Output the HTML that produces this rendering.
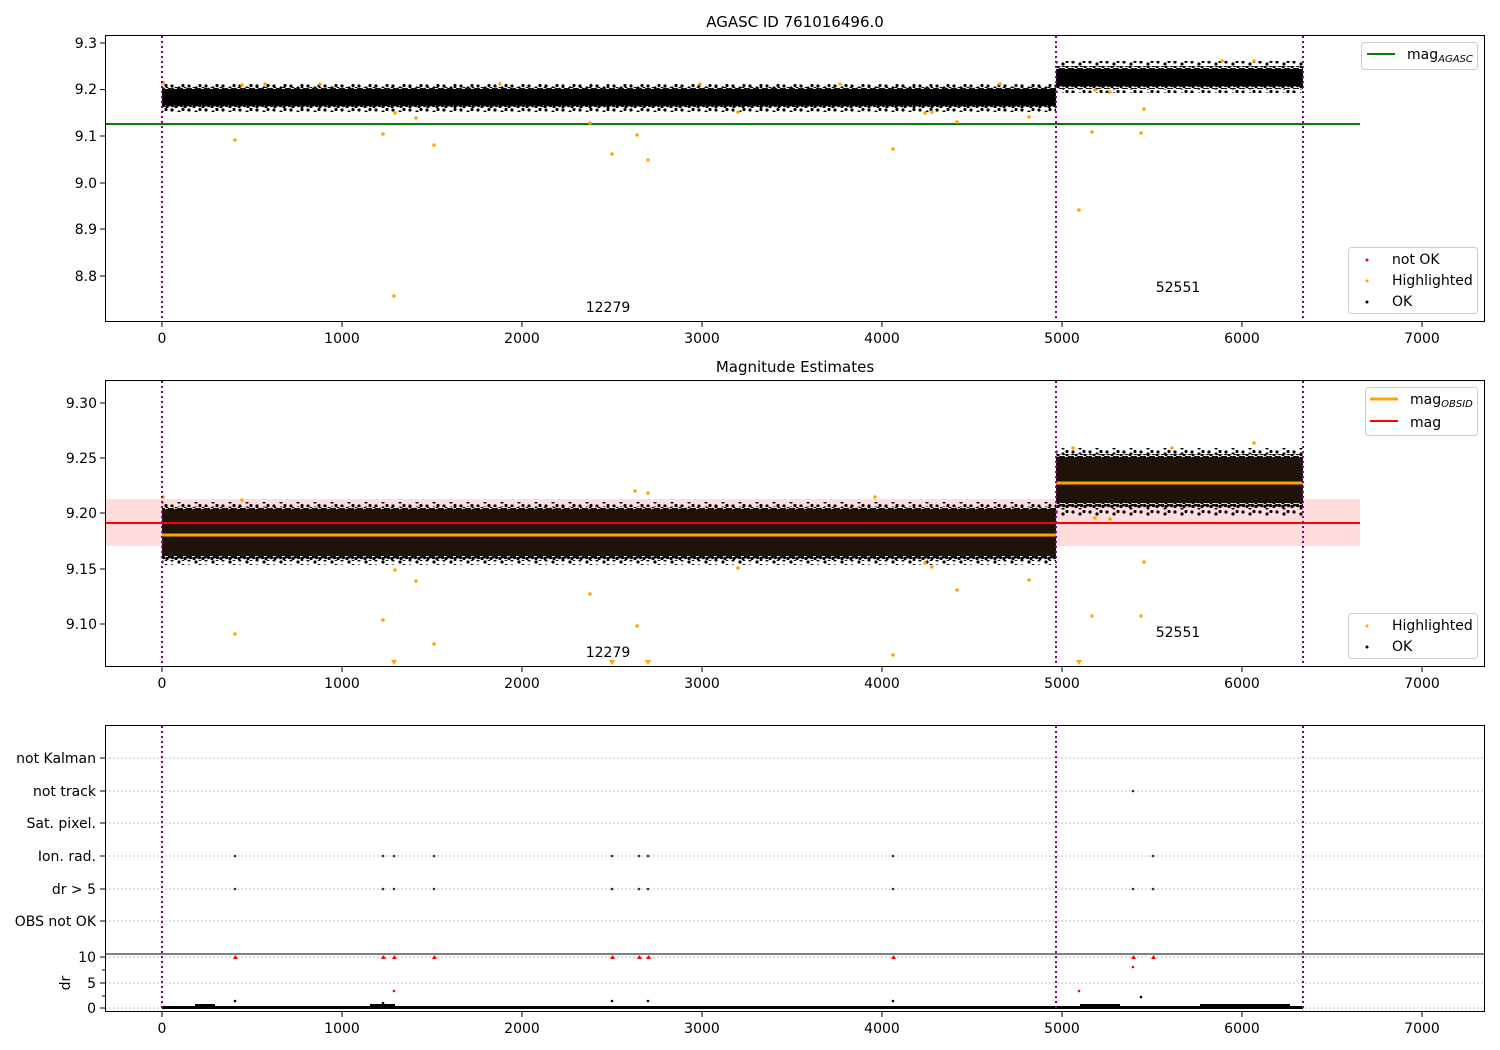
<!DOCTYPE html>
<html><head><style>
html,body{margin:0;padding:0;background:#fff;}
svg{display:block;font-family:"DejaVu Sans","Liberation Sans",sans-serif;}
</style></head><body>
<svg width="1500" height="1050" viewBox="0 0 1500 1050" xmlns="http://www.w3.org/2000/svg">
<rect width="1500" height="1050" fill="#fff"/>
<defs>
<pattern id="spk" width="9" height="4" patternUnits="userSpaceOnUse">
<circle cx="1.5" cy="1.5" r="1.7" fill="#000"/><circle cx="5" cy="2.5" r="1.7" fill="#000"/><circle cx="7.5" cy="1" r="1.5" fill="#000"/>
</pattern>
<pattern id="spk2" width="17" height="6" patternUnits="userSpaceOnUse">
<circle cx="2" cy="2" r="1.6" fill="#000"/><circle cx="9" cy="4" r="1.6" fill="#000"/><circle cx="13" cy="1.5" r="1.6" fill="#000"/>
</pattern>
</defs>

<!-- ===== Panel 1 ===== -->
<text x="795" y="27" font-size="15" text-anchor="middle">AGASC ID 761016496.0</text>
<rect x="162" y="84" width="894" height="4" fill="url(#spk2)"/>
<rect x="162" y="87" width="894" height="3" fill="url(#spk)"/>
<rect x="162" y="89" width="894" height="16" fill="#000"/>
<rect x="162" y="105" width="894" height="3" fill="url(#spk)"/>
<rect x="162" y="108" width="894" height="4" fill="url(#spk2)"/>
<rect x="1056" y="61" width="247" height="5" fill="url(#spk2)"/>
<rect x="1056" y="66" width="247" height="4" fill="url(#spk)"/>
<rect x="1056" y="69" width="247" height="17" fill="#000"/>
<rect x="1056" y="86" width="247" height="3" fill="url(#spk)"/>
<rect x="1056" y="89" width="247" height="4" fill="url(#spk2)"/>
<line x1="105" y1="124" x2="1360" y2="124" stroke="#008000" stroke-width="2"/>
<g fill="orange">
<circle cx="163" cy="83" r="2"/><circle cx="235" cy="140" r="1.8"/><circle cx="242" cy="85" r="1.8"/><circle cx="383" cy="134" r="1.8"/><circle cx="395" cy="113" r="1.8"/><circle cx="416" cy="118" r="1.8"/><circle cx="434" cy="145" r="1.8"/><circle cx="590" cy="123" r="1.8"/><circle cx="612" cy="154" r="1.8"/><circle cx="637" cy="135" r="1.8"/><circle cx="648" cy="160" r="1.8"/><circle cx="738" cy="112" r="1.8"/><circle cx="893" cy="149" r="1.8"/><circle cx="925" cy="113" r="1.8"/><circle cx="932" cy="112" r="1.8"/><circle cx="957" cy="122" r="1.8"/><circle cx="1029" cy="117" r="1.8"/><circle cx="1079" cy="210" r="1.8"/><circle cx="1092" cy="132" r="1.8"/><circle cx="1141" cy="133" r="1.8"/><circle cx="1144" cy="109" r="1.8"/><circle cx="1095" cy="90" r="1.8"/><circle cx="1110" cy="92" r="1.8"/><circle cx="394" cy="296" r="1.8"/>
<circle cx="265" cy="84" r="1.8"/><circle cx="320" cy="84" r="1.8"/><circle cx="500" cy="84" r="1.8"/><circle cx="700" cy="84" r="1.8"/><circle cx="840" cy="84" r="1.8"/><circle cx="1000" cy="84" r="1.8"/><circle cx="1254" cy="61" r="1.8"/><circle cx="1222" cy="61" r="1.8"/>
</g>
<text x="608" y="312" font-size="14" text-anchor="middle">12279</text>
<text x="1178" y="292" font-size="14" text-anchor="middle">52551</text>
<g stroke="#800080" stroke-width="2" stroke-dasharray="2 3">
<line x1="162" y1="36" x2="162" y2="321"/><line x1="1056" y1="36" x2="1056" y2="321"/><line x1="1303" y1="36" x2="1303" y2="321"/>
</g>
<rect x="105.5" y="35.5" width="1379" height="286" fill="none" stroke="#000" stroke-width="1"/>
<g stroke="#000"><line x1="100" y1="43" x2="105" y2="43"/><line x1="100" y1="89.6" x2="105" y2="89.6"/><line x1="100" y1="136" x2="105" y2="136"/><line x1="100" y1="183" x2="105" y2="183"/><line x1="100" y1="229" x2="105" y2="229"/><line x1="100" y1="276" x2="105" y2="276"/></g>
<g font-size="14" text-anchor="end"><text x="97" y="48">9.3</text><text x="97" y="94">9.2</text><text x="97" y="141">9.1</text><text x="97" y="188">9.0</text><text x="97" y="234">8.9</text><text x="97" y="281">8.8</text></g>
<g stroke="#000"><line x1="162" y1="322" x2="162" y2="327"/><line x1="342" y1="322" x2="342" y2="327"/><line x1="522" y1="322" x2="522" y2="327"/><line x1="702" y1="322" x2="702" y2="327"/><line x1="882" y1="322" x2="882" y2="327"/><line x1="1062" y1="322" x2="1062" y2="327"/><line x1="1242" y1="322" x2="1242" y2="327"/><line x1="1422" y1="322" x2="1422" y2="327"/></g>
<g font-size="14" text-anchor="middle"><text x="162" y="343">0</text><text x="342" y="343">1000</text><text x="522" y="343">2000</text><text x="702" y="343">3000</text><text x="882" y="343">4000</text><text x="1062" y="343">5000</text><text x="1242" y="343">6000</text><text x="1422" y="343">7000</text></g>
<rect x="1361.5" y="42.5" width="116" height="27" rx="3" fill="#fff" fill-opacity="0.8" stroke="#ccc"/>
<line x1="1367" y1="54" x2="1395" y2="54" stroke="#008000" stroke-width="2"/>
<text x="1407" y="59" font-size="14">mag<tspan font-size="10" font-style="italic" dy="3">AGASC</tspan></text>
<rect x="1348.5" y="247.5" width="129" height="66" rx="3" fill="#fff" fill-opacity="0.8" stroke="#ccc"/>
<circle cx="1367" cy="260" r="1.5" fill="red"/><text x="1392" y="264" font-size="14">not OK</text>
<circle cx="1367" cy="281" r="1.5" fill="orange"/><text x="1392" y="285" font-size="14">Highlighted</text>
<circle cx="1367" cy="302" r="1.5" fill="#000"/><text x="1392" y="306" font-size="14">OK</text>

<!-- ===== Panel 2 ===== -->
<text x="795" y="372" font-size="15" text-anchor="middle">Magnitude Estimates</text>
<rect x="105" y="499" width="1255" height="47" fill="#ffdddd"/>
<rect x="162" y="502" width="894" height="5" fill="url(#spk2)"/>
<rect x="162" y="507" width="894" height="4" fill="url(#spk)"/>
<rect x="162" y="510" width="894" height="46" fill="#1f1206"/>
<rect x="162" y="556" width="894" height="4" fill="url(#spk)"/>
<rect x="162" y="560" width="894" height="5" fill="url(#spk2)"/>
<rect x="1056" y="448" width="247" height="6" fill="url(#spk2)"/>
<rect x="1056" y="454" width="247" height="5" fill="url(#spk)"/>
<rect x="1056" y="458" width="247" height="45" fill="#1f1206"/>
<rect x="1056" y="503" width="247" height="5" fill="url(#spk)"/>
<rect x="1056" y="508" width="247" height="8" fill="url(#spk2)"/>
<line x1="162" y1="535" x2="1056" y2="535" stroke="orange" stroke-width="3"/>
<line x1="1056" y1="483" x2="1303" y2="483" stroke="orange" stroke-width="3"/>
<line x1="105" y1="523" x2="1360" y2="523" stroke="red" stroke-width="2"/>
<g fill="orange">
<circle cx="163" cy="497" r="1.8"/><circle cx="235" cy="634" r="1.8"/><circle cx="242" cy="500" r="1.8"/><circle cx="383" cy="620" r="1.8"/><circle cx="395" cy="570" r="1.8"/><circle cx="416" cy="581" r="1.8"/><circle cx="434" cy="644" r="1.8"/><circle cx="590" cy="594" r="1.8"/><circle cx="637" cy="626" r="1.8"/><circle cx="738" cy="568" r="1.8"/><circle cx="893" cy="655" r="1.8"/><circle cx="925" cy="563" r="1.8"/><circle cx="932" cy="567" r="1.8"/><circle cx="957" cy="590" r="1.8"/><circle cx="1029" cy="580" r="1.8"/><circle cx="1092" cy="616" r="1.8"/><circle cx="1141" cy="616" r="1.8"/><circle cx="1144" cy="562" r="1.8"/><circle cx="1095" cy="518" r="1.8"/><circle cx="1110" cy="519" r="1.8"/><circle cx="1073" cy="448" r="1.8"/><circle cx="1172" cy="448" r="1.8"/><circle cx="1254" cy="443" r="1.8"/><circle cx="635" cy="491" r="1.8"/><circle cx="648" cy="493" r="1.8"/><circle cx="875" cy="497" r="1.8"/>
<path d="M391 660h6l-3 5z M609 660h6l-3 5z M645 660h6l-3 5z M1076 660h6l-3 5z"/>
</g>
<text x="608" y="657" font-size="14" text-anchor="middle">12279</text>
<text x="1178" y="637" font-size="14" text-anchor="middle">52551</text>
<g stroke="#800080" stroke-width="2" stroke-dasharray="2 3">
<line x1="162" y1="381" x2="162" y2="666"/><line x1="1056" y1="381" x2="1056" y2="666"/><line x1="1303" y1="381" x2="1303" y2="666"/>
</g>
<rect x="105.5" y="380.5" width="1379" height="286" fill="none" stroke="#000"/>
<g stroke="#000"><line x1="100" y1="403" x2="105" y2="403"/><line x1="100" y1="458" x2="105" y2="458"/><line x1="100" y1="513" x2="105" y2="513"/><line x1="100" y1="569" x2="105" y2="569"/><line x1="100" y1="624" x2="105" y2="624"/></g>
<g font-size="14" text-anchor="end"><text x="97" y="408">9.30</text><text x="97" y="463">9.25</text><text x="97" y="518">9.20</text><text x="97" y="574">9.15</text><text x="97" y="629">9.10</text></g>
<g stroke="#000"><line x1="162" y1="667" x2="162" y2="672"/><line x1="342" y1="667" x2="342" y2="672"/><line x1="522" y1="667" x2="522" y2="672"/><line x1="702" y1="667" x2="702" y2="672"/><line x1="882" y1="667" x2="882" y2="672"/><line x1="1062" y1="667" x2="1062" y2="672"/><line x1="1242" y1="667" x2="1242" y2="672"/><line x1="1422" y1="667" x2="1422" y2="672"/></g>
<g font-size="14" text-anchor="middle"><text x="162" y="688">0</text><text x="342" y="688">1000</text><text x="522" y="688">2000</text><text x="702" y="688">3000</text><text x="882" y="688">4000</text><text x="1062" y="688">5000</text><text x="1242" y="688">6000</text><text x="1422" y="688">7000</text></g>
<rect x="1365.5" y="387.5" width="112" height="48" rx="3" fill="#fff" fill-opacity="0.8" stroke="#ccc"/>
<line x1="1370" y1="399" x2="1398" y2="399" stroke="orange" stroke-width="3"/>
<text x="1410" y="404" font-size="14">mag<tspan font-size="10" font-style="italic" dy="3">OBSID</tspan></text>
<line x1="1370" y1="421" x2="1398" y2="421" stroke="red" stroke-width="2"/>
<text x="1410" y="427" font-size="14">mag</text>
<rect x="1348.5" y="613.5" width="129" height="45" rx="3" fill="#fff" fill-opacity="0.8" stroke="#ccc"/>
<circle cx="1367" cy="626" r="1.5" fill="orange"/><text x="1392" y="630" font-size="14">Highlighted</text>
<circle cx="1367" cy="647" r="1.5" fill="#000"/><text x="1392" y="651" font-size="14">OK</text>

<!-- ===== Panel 3 ===== -->
<g stroke="#b0b0b0" stroke-dasharray="2 2" stroke-width="0.8">
<line x1="105" y1="758" x2="1485" y2="758"/><line x1="105" y1="791" x2="1485" y2="791"/><line x1="105" y1="823" x2="1485" y2="823"/><line x1="105" y1="856" x2="1485" y2="856"/><line x1="105" y1="889" x2="1485" y2="889"/><line x1="105" y1="921" x2="1485" y2="921"/>
<line x1="105" y1="957" x2="1485" y2="957"/><line x1="105" y1="983" x2="1485" y2="983"/><line x1="105" y1="1008" x2="1485" y2="1008"/>
</g>
<g font-size="14" text-anchor="end">
<text x="96" y="763">not Kalman</text><text x="96" y="796">not track</text><text x="96" y="828">Sat. pixel.</text><text x="96" y="861">Ion. rad.</text><text x="96" y="894">dr &gt; 5</text><text x="96" y="926">OBS not OK</text>
<text x="96" y="962">10</text><text x="96" y="988">5</text><text x="96" y="1013">0</text>
</g>
<text x="70" y="983" font-size="14" text-anchor="middle" transform="rotate(-90 70 983)">dr</text>
<g stroke="#000">
<line x1="100" y1="758" x2="105" y2="758"/><line x1="100" y1="791" x2="105" y2="791"/><line x1="100" y1="823" x2="105" y2="823"/><line x1="100" y1="856" x2="105" y2="856"/><line x1="100" y1="889" x2="105" y2="889"/><line x1="100" y1="921" x2="105" y2="921"/>
<line x1="100" y1="957" x2="105" y2="957"/><line x1="100" y1="983" x2="105" y2="983"/><line x1="100" y1="1008" x2="105" y2="1008"/>
<line x1="102" y1="970" x2="105" y2="970"/><line x1="102" y1="996" x2="105" y2="996"/>
</g>
<g fill="#333">
<circle cx="235" cy="856" r="1.3"/><circle cx="383" cy="856" r="1.3"/><circle cx="394" cy="856" r="1.3"/><circle cx="434" cy="856" r="1.3"/><circle cx="612" cy="856" r="1.3"/><circle cx="639" cy="856" r="1.3"/><circle cx="648" cy="856" r="1.3"/><circle cx="893" cy="856" r="1.3"/><circle cx="1153" cy="856" r="1.3"/>
<circle cx="235" cy="889" r="1.3"/><circle cx="383" cy="889" r="1.3"/><circle cx="394" cy="889" r="1.3"/><circle cx="434" cy="889" r="1.3"/><circle cx="612" cy="889" r="1.3"/><circle cx="639" cy="889" r="1.3"/><circle cx="648" cy="889" r="1.3"/><circle cx="893" cy="889" r="1.3"/><circle cx="1133" cy="889" r="1.3"/><circle cx="1153" cy="889" r="1.3"/>
<circle cx="1133" cy="791" r="1.3"/>
</g>
<g fill="red">
<path d="M233 959h5l-2.5-4z M381 959h5l-2.5-4z M392 959h5l-2.5-4z M432 959h5l-2.5-4z M610 959h5l-2.5-4z M637 959h5l-2.5-4z M646 959h5l-2.5-4z M891 959h5l-2.5-4z M1131 959h5l-2.5-4z M1151 959h5l-2.5-4z"/>
<circle cx="1133" cy="967" r="1.3"/><circle cx="394" cy="991" r="1.3"/><circle cx="1079" cy="991" r="1.3"/>
</g>
<rect x="162" y="1006" width="1141" height="3" fill="#000"/>
<g fill="#000"><circle cx="235" cy="1001" r="1.3"/><circle cx="612" cy="1001" r="1.3"/><circle cx="893" cy="1001" r="1.3"/><circle cx="1141" cy="997" r="1.3"/><circle cx="383" cy="1003" r="1.3"/><circle cx="648" cy="1001" r="1.3"/>
<rect x="195" y="1004" width="20" height="2"/><rect x="370" y="1004" width="25" height="2"/><rect x="1080" y="1004" width="40" height="2"/><rect x="1200" y="1004" width="90" height="2"/></g>
<line x1="105" y1="954" x2="1485" y2="954" stroke="#000"/>
<g stroke="#800080" stroke-width="2" stroke-dasharray="2 3">
<line x1="162" y1="726" x2="162" y2="1011"/><line x1="1056" y1="726" x2="1056" y2="1011"/><line x1="1303" y1="726" x2="1303" y2="1011"/>
</g>
<rect x="105.5" y="725.5" width="1379" height="286" fill="none" stroke="#000"/>
<g stroke="#000"><line x1="162" y1="1012" x2="162" y2="1017"/><line x1="342" y1="1012" x2="342" y2="1017"/><line x1="522" y1="1012" x2="522" y2="1017"/><line x1="702" y1="1012" x2="702" y2="1017"/><line x1="882" y1="1012" x2="882" y2="1017"/><line x1="1062" y1="1012" x2="1062" y2="1017"/><line x1="1242" y1="1012" x2="1242" y2="1017"/><line x1="1422" y1="1012" x2="1422" y2="1017"/></g>
<g font-size="14" text-anchor="middle"><text x="162" y="1033">0</text><text x="342" y="1033">1000</text><text x="522" y="1033">2000</text><text x="702" y="1033">3000</text><text x="882" y="1033">4000</text><text x="1062" y="1033">5000</text><text x="1242" y="1033">6000</text><text x="1422" y="1033">7000</text></g>
</svg>
</body></html>
